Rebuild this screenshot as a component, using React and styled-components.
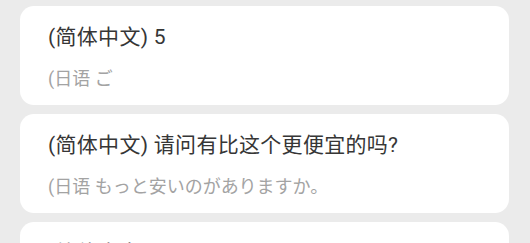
import React from 'react';
import styled, { createGlobalStyle } from 'styled-components';

const GlobalStyle = createGlobalStyle`
  html, body {
    margin: 0;
    padding: 0;
    background: #ebebeb;
    font-family: Roboto, "Noto Sans CJK SC", sans-serif;
  }
`;

const phrases = [
  { zh: '(简体中文) 5', ja: '(日语 ご' },
  { zh: '(简体中文) 请问有比这个更便宜的吗?', ja: '(日语 もっと安いのがありますか。' },
  { zh: '(简体中文) 6', ja: '(日语 ろく' }
];

const App = () => {
  return (
    <>
      <GlobalStyle />
      <List>
        {phrases.map((p, i) => (
          <Card key={i}>
            <Title>{p.zh}</Title>
            <Subtitle>{p.ja}</Subtitle>
          </Card>
        ))}
      </List>
    </>
  );
};

const List = styled.div`
  display: flex;
  flex-direction: column;
  gap: 9px;
  padding: 6px 21px 0 20px;
  height: 243px;
  box-sizing: border-box;
  overflow: hidden;
`;

const Card = styled.div`
  flex-shrink: 0;
  display: flex;
  flex-direction: column;
  background: #ffffff;
  border-radius: 14px;
  padding: 17px 28px 12px;
  height: 99px;
  box-sizing: border-box;
`;

const Title = styled.div`
  font-size: 21px;
  line-height: 28px;
  letter-spacing: 0.3px;
  color: #363636;
  white-space: nowrap;
`;

const Subtitle = styled.div`
  margin-top: 15px;
  font-size: 18px;
  line-height: 26px;
  color: #a3a3a3;
  white-space: nowrap;
`;

export default App;
